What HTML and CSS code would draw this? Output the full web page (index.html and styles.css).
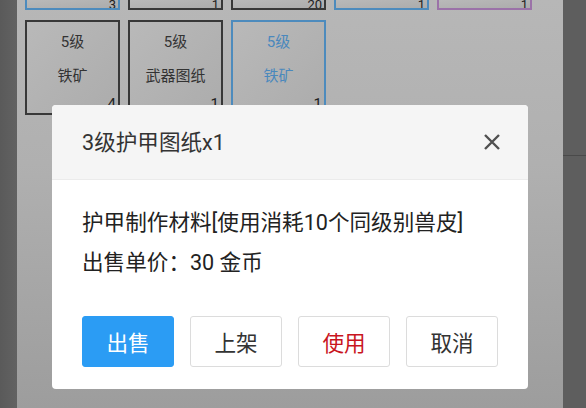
FILE: index.html
```html
<!DOCTYPE html>
<html lang="zh-CN">
<head>
  <meta charset="UTF-8">
  <meta name="viewport" content="width=device-width, initial-scale=1.0">
  <title>背包</title>
  <link rel="stylesheet" href="styles.css">
</head>
<body>

  <div class="side side-left"></div>

  <div class="panel">
    <div class="grid">
      <div class="cell short blue"><span class="num">3</span></div>
      <div class="cell short"><span class="num">1</span></div>
      <div class="cell short"><span class="num">20</span></div>
      <div class="cell short blue"><span class="num">1</span></div>
      <div class="cell short purple"><span class="num">1</span></div>

      <div class="cell"><div class="lv">5级</div><div class="name">铁矿</div><span class="num">4</span></div>
      <div class="cell"><div class="lv">5级</div><div class="name">武器图纸</div><span class="num">1</span></div>
      <div class="cell blue blue-text"><div class="lv">5级</div><div class="name">铁矿</div><span class="num">1</span></div>
    </div>

    <div class="dialog">
      <div class="dialog-head">
        <span class="dialog-title">3级护甲图纸x1</span>
        <svg class="close" width="18" height="18" viewBox="0 0 18 18">
          <path d="M2 2 L16 16 M16 2 L2 16" stroke="#505050" stroke-width="2.4" fill="none"/>
        </svg>
      </div>
      <div class="dialog-body">
        <p>护甲制作材料[使用消耗10个同级别兽皮]</p>
        <p>出售单价：30 金币</p>
      </div>
      <div class="dialog-actions">
        <button class="btn primary">出售</button>
        <button class="btn">上架</button>
        <button class="btn danger">使用</button>
        <button class="btn">取消</button>
      </div>
    </div>
  </div>

  <div class="side side-right"><div class="rule"></div></div>

</body>
</html>
```

FILE: styles.css
```css
body {
  margin: 0;
  width: 586px;
  height: 408px;
  overflow: hidden;
  display: flex;
  font-family: Roboto, "Noto Sans CJK SC", sans-serif;
}

.side {
  background: #5c5c5c;
}

.side-left {
  width: 17px;
  background: linear-gradient(to right, #5a5a5a, #626262);
}

.side-right {
  width: 23px;
  background: #5e5e5e;
}

.side-right .rule {
  height: 155px;
  border-bottom: 1px solid #4a4a4a;
}

.panel {
  flex: 1;
  position: relative;
  background: linear-gradient(to bottom, #b7b7b7 0%, #b0b0b0 40%, #9d9d9d 100%);
  overflow: hidden;
}

.grid {
  display: grid;
  grid-template-columns: repeat(5, 95px);
  gap: 10px 8px;
  margin: 0 0 0 8px;
}

.cell {
  height: 95px;
  box-sizing: border-box;
  border: 2px solid #383838;
  border-top: none;
  background: linear-gradient(to bottom right, #b9b9b9, #acacac);
  position: relative;
  text-align: center;
  color: #333;
  font-size: 15px;
}

.cell.short {
  height: 10px;
  overflow: hidden;
}

.cell.short .num {
  bottom: -4px;
  line-height: 14px;
  font-size: 13px;
}

.grid .cell:not(.short) {
  border-top: 2px solid #383838;
}

.grid .cell.blue:not(.short) {
  border-top-color: #4d8bbd;
}

.cell.blue {
  border-color: #4d8bbd;
}

.cell.purple {
  border-color: #9b72a8;
}

.blue-text {
  color: #4a88bd;
}

.lv {
  margin-top: 8px;
  line-height: 24px;
}

.name {
  margin-top: 10px;
  line-height: 24px;
}

.num {
  position: absolute;
  right: 2px;
  bottom: 0;
  font-size: 15px;
  line-height: 18px;
  color: #222;
}

.dialog {
  position: absolute;
  left: 35px;
  top: 105px;
  width: 476px;
  background: #fff;
  border-radius: 4px;
  overflow: hidden;
}

.dialog-head {
  height: 74px;
  background: #f5f5f5;
  border-bottom: 1px solid #ebebeb;
  display: flex;
  align-items: center;
  justify-content: space-between;
  padding: 0 27px 0 30px;
}

.dialog-title {
  font-size: 21.6px;
  color: #333;
  margin-top: -3px;
}

.dialog-body {
  padding: 23px 30px 0;
  font-size: 21.6px;
  color: #222;
}

.dialog-body p {
  margin: 0;
  line-height: 40px;
}

.dialog-actions {
  display: flex;
  gap: 16px;
  padding: 33px 30px 22px;
}

.btn {
  width: 92px;
  height: 51px;
  font-family: inherit;
  font-size: 21.6px;
  color: #333;
  background: #fff;
  border: 1px solid #dcdcdc;
  border-radius: 3px;
}

.btn.primary {
  background: #2b9cf4;
  border-color: #2b9cf4;
  color: #fff;
}

.btn.danger {
  color: #c9151e;
}
```
